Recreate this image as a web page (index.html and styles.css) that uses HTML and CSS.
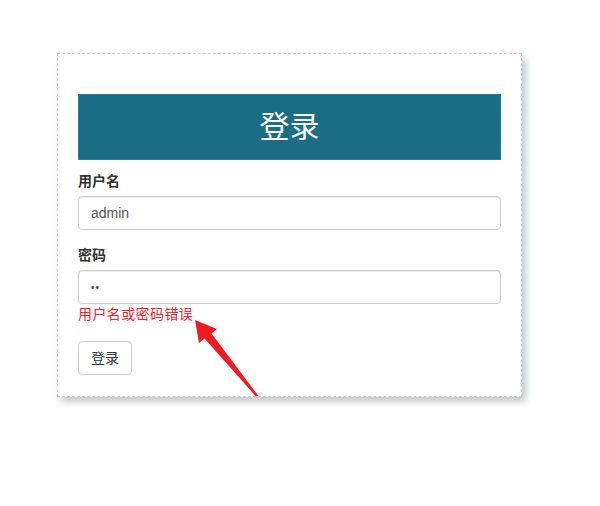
FILE: index.html
```html
<!DOCTYPE html>
<html lang="zh">
<head>
<meta charset="utf-8">
<title>登录</title>
<link rel="stylesheet" href="styles.css">
</head>
<body>
<div class="card">
  <h2 class="title">登录</h2>
  <div class="form-group">
    <label class="label">用户名</label>
    <input class="control" type="text" value="admin">
  </div>
  <div class="form-group last">
    <label class="label">密码</label>
    <input class="control pw" type="password" value="ab">
    <div class="error">用户名或密码错误</div>
  </div>
  <button class="btn">登录</button>
</div>
<svg class="arrow" width="600" height="506" viewBox="0 0 600 506">
  <polygon points="195,320 217,329 211.5,333.5 258.5,396 256,396.5 204.5,338.5 199,343" fill="#ec1c24"/>
</svg>
</body>
</html>
```
FILE: styles.css
```css
* { box-sizing: border-box; }
html, body { margin: 0; padding: 0; background: #fff; }
body {
  font-family: "Liberation Sans", "Noto Sans CJK SC", sans-serif;
  font-size: 14px;
  line-height: 20px;
  color: #333;
  position: relative;
  width: 600px;
  height: 506px;
  padding-top: 53px;
  padding-left: 57px;
}
.card {
  width: 465px;
  height: 344px;
  border: 1px dashed #c9cccc;
  padding: 20px;
  box-shadow: 4px 5px 7px rgba(100, 125, 125, 0.4);
  background: #fff;
}
.title {
  margin: 20px 0 11px;
  height: 66px;
  background: #1b6d85;
  border: 1px solid #2b7c93;
  color: #fff;
  font-weight: normal;
  font-size: 30px;
  line-height: 64px;
  text-align: center;
}
.form-group { margin-bottom: 15px; }
.form-group.last { margin-bottom: 17px; }
.label {
  display: block;
  font-weight: bold;
  margin-bottom: 5px;
  margin-top: 1px;
}
.control {
  display: block;
  width: 100%;
  height: 34px;
  padding: 6px 12px;
  font-family: inherit;
  font-size: 14px;
  color: #555;
  background: #fff;
  border: 1px solid #ccc;
  border-radius: 4px;
  box-shadow: inset 0 1px 1px rgba(0,0,0,.075);
  outline: none;
}
.pw { letter-spacing: 1px; font-size: 10px; color: #444; }
.error {
  color: #f5222d;
  line-height: 20px;
  letter-spacing: 0.4px;
}
.btn {
  display: block;
  height: 34px;
  padding: 6px 12px;
  font-family: inherit;
  font-size: 14px;
  line-height: 20px;
  color: #333;
  background: #fff;
  border: 1px solid #ccc;
  border-radius: 4px;
}
.arrow {
  position: absolute;
  left: 0;
  top: 0;
  pointer-events: none;
}
```
